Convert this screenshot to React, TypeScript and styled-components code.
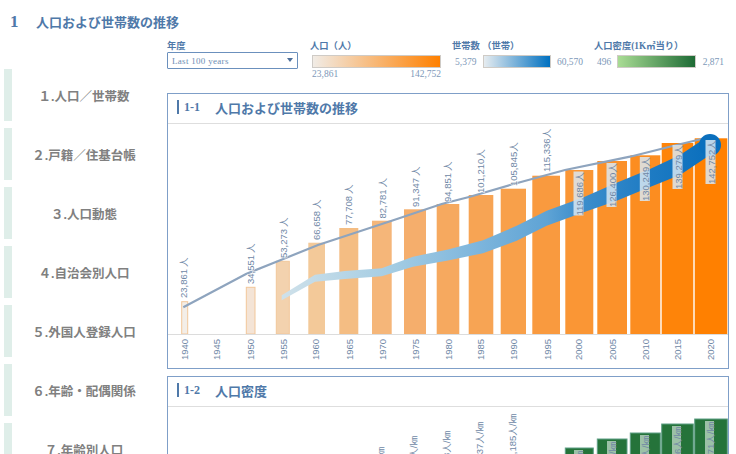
import React from "react";
import styled, { createGlobalStyle } from "styled-components";

const GlobalStyle = createGlobalStyle`
  html, body {
    margin: 0;
    padding: 0;
    background: #fff;
  }
`;

const SERIF = `"Liberation Serif", "Noto Sans CJK JP", serif`;
const SANS = `"Liberation Sans", "Noto Sans CJK JP", sans-serif`;
const BLUE = "#4f79a9";

const Page = styled.div`
  width: 736px;
  height: 454px;
  overflow: hidden;
  font-family: ${SERIF};
`;

const PageTitle = styled.h1`
  display: flex;
  align-items: center;
  height: 40px;
  margin: 0;
  padding: 3px 0 0 10px;
  box-sizing: border-box;
  color: ${BLUE};
  font-size: 13px;
  font-weight: 700;
`;

const TitleNumber = styled.span`
  width: 26px;
  font-size: 17px;
`;

const Main = styled.div`
  display: grid;
  grid-template-columns: 167px 562px;
`;

const Sidebar = styled.nav`
  display: flex;
  flex-direction: column;
  gap: 7px;
  padding: 29px 0 0 4px;
`;

const SideItem = styled.div`
  display: flex;
  height: 52px;
  flex: none;
`;

const SideBar = styled.div`
  width: 8px;
  background: #dfeee9;
`;

const SideLabel = styled.div`
  width: 144px;
  display: flex;
  align-items: center;
  justify-content: center;
  padding-top: 1px;
  box-sizing: border-box;
  color: #808080;
  font-family: ${SANS};
  font-size: 12.5px;
  font-weight: 700;
`;

const Content = styled.div`
  display: flex;
  flex-direction: column;
  gap: 7px;
`;

const Filters = styled.div`
  display: flex;
  height: 46px;
`;

const FilterGroup = styled.div<{ $width: number; $gap: number }>`
  width: ${(p) => p.$width}px;
  margin-right: ${(p) => p.$gap}px;
  flex: none;
`;

const FilterLabel = styled.div`
  height: 12px;
  color: ${BLUE};
  font-size: 9.3px;
  font-weight: 700;
  line-height: 12px;
  white-space: nowrap;
`;

const SelectWrap = styled.div`
  position: relative;
  height: 17px;
`;

const YearSelect = styled.select`
  appearance: none;
  display: block;
  width: 100%;
  height: 17px;
  padding: 0 0 0 4px;
  border: 1px solid #6b90bd;
  border-radius: 1px;
  background: #fff;
  color: #6d8db3;
  font-family: ${SERIF};
  font-size: 9px;
  letter-spacing: 0.3px;
`;

const Caret = styled.span`
  position: absolute;
  top: 6px;
  right: 5px;
  border-left: 3px solid transparent;
  border-right: 3px solid transparent;
  border-top: 4px solid #4d6f9b;
`;

const LegendBar = styled.div<{ $from: string; $to: string; $width: number }>`
  width: ${(p) => p.$width}px;
  height: 13px;
  flex: none;
  box-sizing: border-box;
  border: 1px solid #cfcbc6;
  background: linear-gradient(to right, ${(p) => p.$from}, ${(p) => p.$to});
`;

const LegendTop = styled.div`
  padding: 3px 0 0 2px;
`;

const LegendRange = styled.div`
  display: flex;
  justify-content: space-between;
  margin-top: 1px;
  color: #7d98b8;
  font-size: 9.5px;
  line-height: 11px;
`;

const LegendRow = styled.div`
  display: flex;
  align-items: center;
  justify-content: space-between;
  padding: 3px 0 0 3px;
  color: #7d98b8;
  font-size: 9.5px;
`;

const Card = styled.section`
  flex: none;
  height: 276px;
  box-sizing: border-box;
  border: 1px solid #7f9fc8;
  background: #fff;
`;

const CardHeader = styled.div`
  display: flex;
  align-items: center;
  height: 30px;
  box-sizing: border-box;
  padding: 0 0 3px 9px;
  border-bottom: 1px solid #dedede;
  color: ${BLUE};
  font-size: 13px;
  font-weight: 700;
`;

const HeaderTick = styled.span`
  width: 2px;
  height: 14px;
  margin-right: 5px;
  background: ${BLUE};
`;

const HeaderNumber = styled.span`
  width: 31px;
  font-size: 12px;
`;

const ChartSvg = styled.svg`
  display: block;
  width: 560px;
  height: 245px;
`;

const ChartText = styled.text`
  font-family: ${SANS};
  font-size: 9.5px;
  fill: #7088a6;
`;

const NAV_ITEMS = [
  "１.人口／世帯数",
  "２.戸籍／住基台帳",
  "３.人口動態",
  "４.自治会別人口",
  "５.外国人登録人口",
  "６.年齢・配偶関係",
  "７.年齢別人口",
];

type Bar = { x: number; end: number; top: number };

const BARS: Bar[] = [
  { x: 181.7, end: 187.7, top: 301.7 },
  { x: 246.3, end: 255, top: 287.3 },
  { x: 276.3, end: 289.3, top: 261.3 },
  { x: 308.3, end: 325, top: 242.7 },
  { x: 339.3, end: 358.3, top: 228 },
  { x: 372, end: 391.7, top: 220.7 },
  { x: 404, end: 426, top: 209.3 },
  { x: 436.7, end: 459.3, top: 204 },
  { x: 468.7, end: 493.3, top: 195 },
  { x: 500.7, end: 526, top: 188.7 },
  { x: 532.3, end: 560, top: 175.7 },
  { x: 565.3, end: 593.3, top: 170 },
  { x: 597.3, end: 627, top: 161 },
  { x: 630.3, end: 660.3, top: 155.3 },
  { x: 661.7, end: 693.3, top: 143 },
  { x: 694.7, end: 727.3, top: 138.3 },
];

const BAR_FILLS = [
  "#f3eee8", "#f4e4d6", "#f3d2ae", "#f3c999", "#f4bd83", "#f5b679", "#f5ae6c", "#f6a95f",
  "#f7a454", "#f8a04a", "#f99a3f", "#fa9635", "#fb912a", "#fc8d20", "#fe8409", "#ff8000",
];

const YEARS: [string, number][] = [
  ["1940", 184], ["1945", 216], ["1950", 250], ["1955", 283], ["1960", 315], ["1965", 349],
  ["1970", 382], ["1975", 415], ["1980", 448], ["1985", 480], ["1990", 513], ["1995", 547],
  ["2000", 578], ["2005", 612], ["2010", 645], ["2015", 677], ["2020", 710],
];

const VALUE_LABELS: [string, number, number][] = [
  ["23,861\u2009人", 187, 298],
  ["34,551\u2009人", 253.5, 284],
  ["53,273\u2009人", 286.5, 258],
  ["66,658\u2009人", 319.5, 240],
  ["77,708\u2009人", 352, 225],
  ["82,781\u2009人", 385.5, 218.5],
  ["91,347\u2009人", 418.5, 207],
  ["94,851\u2009人", 451, 202],
  ["101,210人", 483.5, 193],
  ["105,845人", 516.5, 186],
  ["115,336人", 550, 172],
];

const BOXED_LABELS: [string, number, number][] = [
  ["119,686人", 582.5, 215.5],
  ["126,400人", 615.5, 207],
  ["130,249人", 648.8, 201],
  ["139,279人", 681.5, 189],
  ["142,752人", 714.5, 184],
];

const LINE = "183.3,307.3 246,274 278.3,261 318,245 391.7,220.7 441.7,204 470,196.7 510,185 565,170 630,156.7 676.7,145 710,137";

// centre x, centre y, vertical thickness of the household band
const BAND: [number, number, number][] = [
  [281.7, 297.7, 5], [315, 278.3, 7], [345, 275, 8], [381.7, 272.3, 8], [413, 261.7, 10],
  [448, 255, 11], [483, 246.7, 13], [516.7, 233.3, 15], [546.7, 218.3, 15], [583, 205, 15],
  [616.7, 191.7, 18], [650, 178, 18], [680, 165, 20], [710, 145, 20],
];

const bandPoints = () => {
  const top = BAND.map(([x, y, w]) => `${x},${y - w / 2}`);
  const bottom = BAND.map(([x, y, w]) => `${x},${y + w / 2}`).reverse();
  return [...top, ...bottom].join(" ");
};

const DENSITY_BARS: [number, number, number][] = [
  [565.3, 593.3, 448],
  [597.3, 627, 439],
  [630.3, 660.3, 433],
  [661.7, 693.3, 424],
  [694.7, 727.3, 419],
];

const DENSITY_LABELS: [string, number, number][] = [
  ["1,641人/㎞", 384, 447],
  ["1,896人/㎞", 417, 436],
  ["1,993人/㎞", 450, 431],
  ["2,037人/㎞", 483, 422],
  ["2,185人/㎞", 516, 414],
];

const DENSITY_BOXED: [string, number, number][] = [
  ["2,407人/㎞", 583, 451],
  ["2,563人/㎞", 616, 442],
  ["2,617人/㎞", 649, 436],
  ["2,806人/㎞", 681, 427],
  ["2,871人/㎞", 714, 422],
];

const vertical = (x: number, y: number) => `rotate(-90 ${x} ${y})`;

const PopulationChart = () => (
  <ChartSvg viewBox="168 124 560 245">
    <defs>
      <linearGradient id="band" gradientUnits="userSpaceOnUse" x1="282" y1="0" x2="710" y2="0">
        <stop offset="0" stopColor="#cfe1ea" />
        <stop offset="0.25" stopColor="#a5cde3" />
        <stop offset="0.46" stopColor="#7db5dc" />
        <stop offset="0.62" stopColor="#5ea3d5" />
        <stop offset="0.69" stopColor="#3f8fcc" />
        <stop offset="0.85" stopColor="#1f7cc4" />
        <stop offset="1" stopColor="#0a6fbd" />
      </linearGradient>
    </defs>
    {BARS.map((b, i) => (
      <rect
        key={b.x}
        x={b.x}
        y={b.top}
        width={b.end - b.x}
        height={334 - b.top}
        fill={BAR_FILLS[i]}
        stroke={i < 3 ? "#f2c79a" : "none"}
      />
    ))}
    <line x1="168" y1="334.5" x2="728" y2="334.5" stroke="#dcdcdc" />
    <polyline points={LINE} fill="none" stroke="#8ea4be" strokeWidth="2.2" />
    <polygon points={bandPoints()} fill="url(#band)" />
    <circle cx="710" cy="145" r="11" fill="#0a6fbd" />
    {VALUE_LABELS.map(([label, x, y]) => (
      <ChartText
        key={label}
        x={x}
        y={y}
        transform={vertical(x, y)}
        stroke="#fff"
        strokeWidth="1.5"
        strokeOpacity={0.7}
        paintOrder="stroke"
      >
        {label}
      </ChartText>
    ))}
    {BOXED_LABELS.map(([label, x, y]) => (
      <g key={label}>
        <rect x={x - 9} y={y - 44} width={10} height={44} fill="#d9e8f2" opacity={0.85} />
        <ChartText x={x} y={y} transform={vertical(x, y)}>
          {label}
        </ChartText>
      </g>
    ))}
    {YEARS.map(([year, x]) => (
      <ChartText key={year} x={x + 3.5} y={360} transform={vertical(x + 3.5, 360)}>
        {year}
      </ChartText>
    ))}
  </ChartSvg>
);

const DensityChart = () => (
  <ChartSvg viewBox="168 407 560 245">
    {DENSITY_BARS.map(([x, end, top]) => (
      <rect key={x} x={x} y={top} width={end - x} height={240} fill="#25733a" stroke="#5f9f86" />
    ))}
    {DENSITY_LABELS.map(([label, x, y]) => (
      <ChartText key={label} x={x} y={y} textAnchor="end" transform={vertical(x, y)}>
        {label}
      </ChartText>
    ))}
    {DENSITY_BOXED.map(([label, x, y]) => (
      <g key={label}>
        <rect x={x - 9} y={y - 1} width={9} height={60} fill="#cfe3d5" opacity={0.7} />
        <ChartText x={x} y={y} textAnchor="end" transform={vertical(x, y)}>
          {label}
        </ChartText>
      </g>
    ))}
  </ChartSvg>
);

const App = () => (
  <Page>
    <GlobalStyle />
    <PageTitle>
      <TitleNumber>1</TitleNumber>
      人口および世帯数の推移
    </PageTitle>
    <Main>
      <Sidebar>
        {NAV_ITEMS.map((item) => (
          <SideItem key={item}>
            <SideBar />
            <SideLabel>{item}</SideLabel>
          </SideItem>
        ))}
      </Sidebar>
      <Content>
        <Filters>
          <FilterGroup $width={131} $gap={12}>
            <FilterLabel>年度</FilterLabel>
            <SelectWrap>
              <YearSelect defaultValue="100">
                <option value="100">Last 100 years</option>
              </YearSelect>
              <Caret />
            </SelectWrap>
          </FilterGroup>
          <FilterGroup $width={131} $gap={11}>
            <FilterLabel>人口（人）</FilterLabel>
            <LegendTop>
              <LegendBar $from="#f1ece6" $to="#ff8000" $width={129} />
              <LegendRange>
                <span>23,861</span>
                <span>142,752</span>
              </LegendRange>
            </LegendTop>
          </FilterGroup>
          <FilterGroup $width={131} $gap={11}>
            <FilterLabel>世帯数 （世帯）</FilterLabel>
            <LegendRow>
              <span>5,379</span>
              <LegendBar $from="#e6ecf0" $to="#0070c0" $width={68} />
              <span>60,570</span>
            </LegendRow>
          </FilterGroup>
          <FilterGroup $width={130} $gap={0}>
            <FilterLabel>人口密度(1K㎡当り）</FilterLabel>
            <LegendRow>
              <span>496</span>
              <LegendBar $from="#a9dc94" $to="#1e6b35" $width={79} />
              <span>2,871</span>
            </LegendRow>
          </FilterGroup>
        </Filters>
        <Card>
          <CardHeader>
            <HeaderTick />
            <HeaderNumber>1-1</HeaderNumber>
            人口および世帯数の推移
          </CardHeader>
          <PopulationChart />
        </Card>
        <Card>
          <CardHeader>
            <HeaderTick />
            <HeaderNumber>1-2</HeaderNumber>
            人口密度
          </CardHeader>
          <DensityChart />
        </Card>
      </Content>
    </Main>
  </Page>
);

export default App;
